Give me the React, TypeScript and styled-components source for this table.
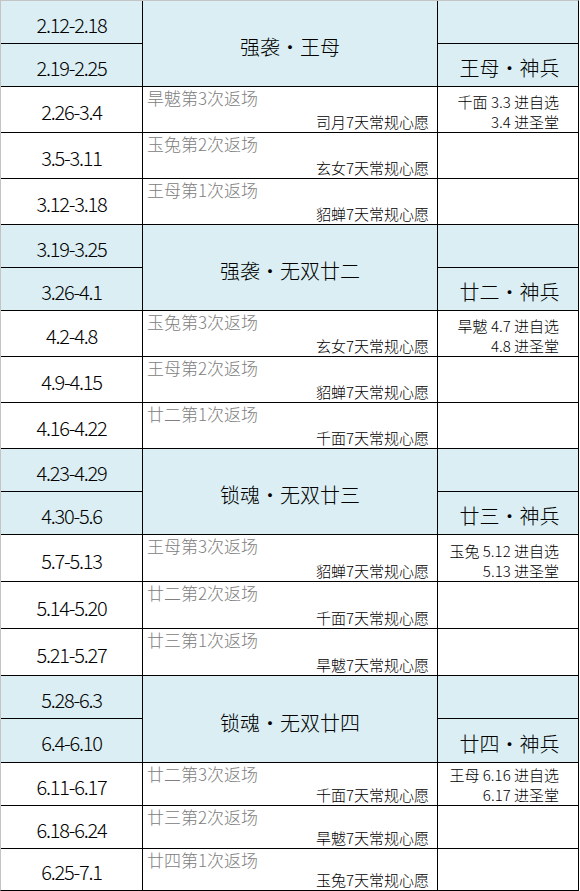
import { ReactElement } from 'react';

import styled, { createGlobalStyle } from 'styled-components';

interface IEvent {
  kind: 'event';
  dates: [string, string];
  title: string;
  weapon: string;
  heights: [number, number];
}

interface IWeek {
  kind: 'week';
  date: string;
  rerun: string;
  wish: string;
  note?: string[];
  height: number;
}

type Block = IEvent | IWeek;

const schedule: Block[] = [
  { kind: 'event', dates: ['2.12-2.18', '2.19-2.25'], title: '强袭・王母', weapon: '王母・神兵', heights: [42, 42] },
  { kind: 'week', date: '2.26-3.4', rerun: '旱魃第3次返场', wish: '司月7天常规心愿', note: ['千面 3.3 进自选', '3.4 进圣堂'], height: 45 },
  { kind: 'week', date: '3.5-3.11', rerun: '玉兔第2次返场', wish: '玄女7天常规心愿', height: 45 },
  { kind: 'week', date: '3.12-3.18', rerun: '王母第1次返场', wish: '貂蝉7天常规心愿', height: 45 },
  { kind: 'event', dates: ['3.19-3.25', '3.26-4.1'], title: '强袭・无双廿二', weapon: '廿二・神兵', heights: [42, 42] },
  { kind: 'week', date: '4.2-4.8', rerun: '玉兔第3次返场', wish: '玄女7天常规心愿', note: ['旱魃 4.7 进自选', '4.8 进圣堂'], height: 45 },
  { kind: 'week', date: '4.9-4.15', rerun: '王母第2次返场', wish: '貂蝉7天常规心愿', height: 45 },
  { kind: 'week', date: '4.16-4.22', rerun: '廿二第1次返场', wish: '千面7天常规心愿', height: 45 },
  { kind: 'event', dates: ['4.23-4.29', '4.30-5.6'], title: '锁魂・无双廿三', weapon: '廿三・神兵', heights: [42, 42] },
  { kind: 'week', date: '5.7-5.13', rerun: '王母第3次返场', wish: '貂蝉7天常规心愿', note: ['玉兔 5.12 进自选', '5.13 进圣堂'], height: 46 },
  { kind: 'week', date: '5.14-5.20', rerun: '廿二第2次返场', wish: '千面7天常规心愿', height: 46 },
  { kind: 'week', date: '5.21-5.27', rerun: '廿三第1次返场', wish: '旱魃7天常规心愿', height: 46 },
  { kind: 'event', dates: ['5.28-6.3', '6.4-6.10'], title: '锁魂・无双廿四', weapon: '廿四・神兵', heights: [42, 43] },
  { kind: 'week', date: '6.11-6.17', rerun: '廿二第3次返场', wish: '千面7天常规心愿', note: ['王母 6.16 进自选', '6.17 进圣堂'], height: 42 },
  { kind: 'week', date: '6.18-6.24', rerun: '廿三第2次返场', wish: '旱魃7天常规心愿', height: 42 },
  { kind: 'week', date: '6.25-7.1', rerun: '廿四第1次返场', wish: '玉兔7天常规心愿', height: 41 },
];

const rowHeights = schedule
  .flatMap((b) => (b.kind === 'event' ? b.heights : [b.height]))
  .map((h) => `${h}px`)
  .join(' ');

function App(): ReactElement {
  return (
    <>
      <GlobalStyle />
      <Sheet $rows={rowHeights}>
        {schedule.map((b, i) =>
          b.kind === 'event' ? (
            <EventBlock key={i} block={b} />
          ) : (
            <WeekBlock key={i} block={b} />
          ),
        )}
      </Sheet>
    </>
  );
}

function EventBlock({ block }: { block: IEvent }): ReactElement {
  return (
    <>
      <DateCell $blue>{block.dates[0]}</DateCell>
      <EventTitle>{block.title}</EventTitle>
      <WeaponCell />
      <DateCell $blue>{block.dates[1]}</DateCell>
      <WeaponCell>{block.weapon}</WeaponCell>
    </>
  );
}

function WeekBlock({ block }: { block: IWeek }): ReactElement {
  return (
    <>
      <DateCell>{block.date}</DateCell>
      <RerunCell>
        <RerunLabel>{block.rerun}</RerunLabel>
        <WishLabel>{block.wish}</WishLabel>
      </RerunCell>
      <NoteCell>
        {block.note?.map((line) => <NoteLine key={line}>{line}</NoteLine>)}
      </NoteCell>
    </>
  );
}

const GlobalStyle = createGlobalStyle`
  body {
    margin: 0;
    background: #fff;
    font-family: "Noto Sans CJK SC", "Liberation Sans", sans-serif;
    font-weight: 300;
    color: #000;
  }
`;

const Sheet = styled.div<{ $rows: string }>`
  display: grid;
  grid-template-columns: 141px 294px 140px;
  grid-template-rows: ${(p) => p.$rows};
  gap: 1px;
  width: 577px;
  background: #000;
  border-top: 1px solid #c4c4c4;
  border-left: 1px solid #c4c4c4;
  border-right: 1px solid #000;
  border-bottom: 1px solid #000;
`;

const DateCell = styled.div<{ $blue?: boolean }>`
  display: flex;
  align-items: center;
  justify-content: center;
  padding-top: 4px;
  background: ${(p) => (p.$blue ? '#daeef3' : '#fff')};
  font-size: 20px;
  letter-spacing: -1.2px;
`;

const EventTitle = styled.div`
  grid-row: span 2;
  display: flex;
  align-items: center;
  justify-content: center;
  padding-top: 6px;
  background: #daeef3;
  font-size: 20px;
`;

const WeaponCell = styled.div`
  display: flex;
  align-items: center;
  justify-content: center;
  padding: 5px 0 0 3px;
  background: #daeef3;
  font-size: 20px;
`;

const RerunCell = styled.div`
  display: flex;
  flex-direction: column;
  justify-content: space-between;
  padding: 1px 8px 0 4px;
  background: #fff;
`;

const RerunLabel = styled.div`
  font-size: 17px;
  line-height: 20px;
  color: #808080;
`;

const WishLabel = styled.div`
  align-self: flex-end;
  font-size: 15px;
  line-height: 20px;
`;

const NoteCell = styled.div`
  display: flex;
  flex-direction: column;
  justify-content: flex-end;
  align-items: flex-end;
  padding-right: 19px;
  background: #fff;
`;

const NoteLine = styled.div`
  font-size: 15px;
  line-height: 20px;
`;

export default App;
